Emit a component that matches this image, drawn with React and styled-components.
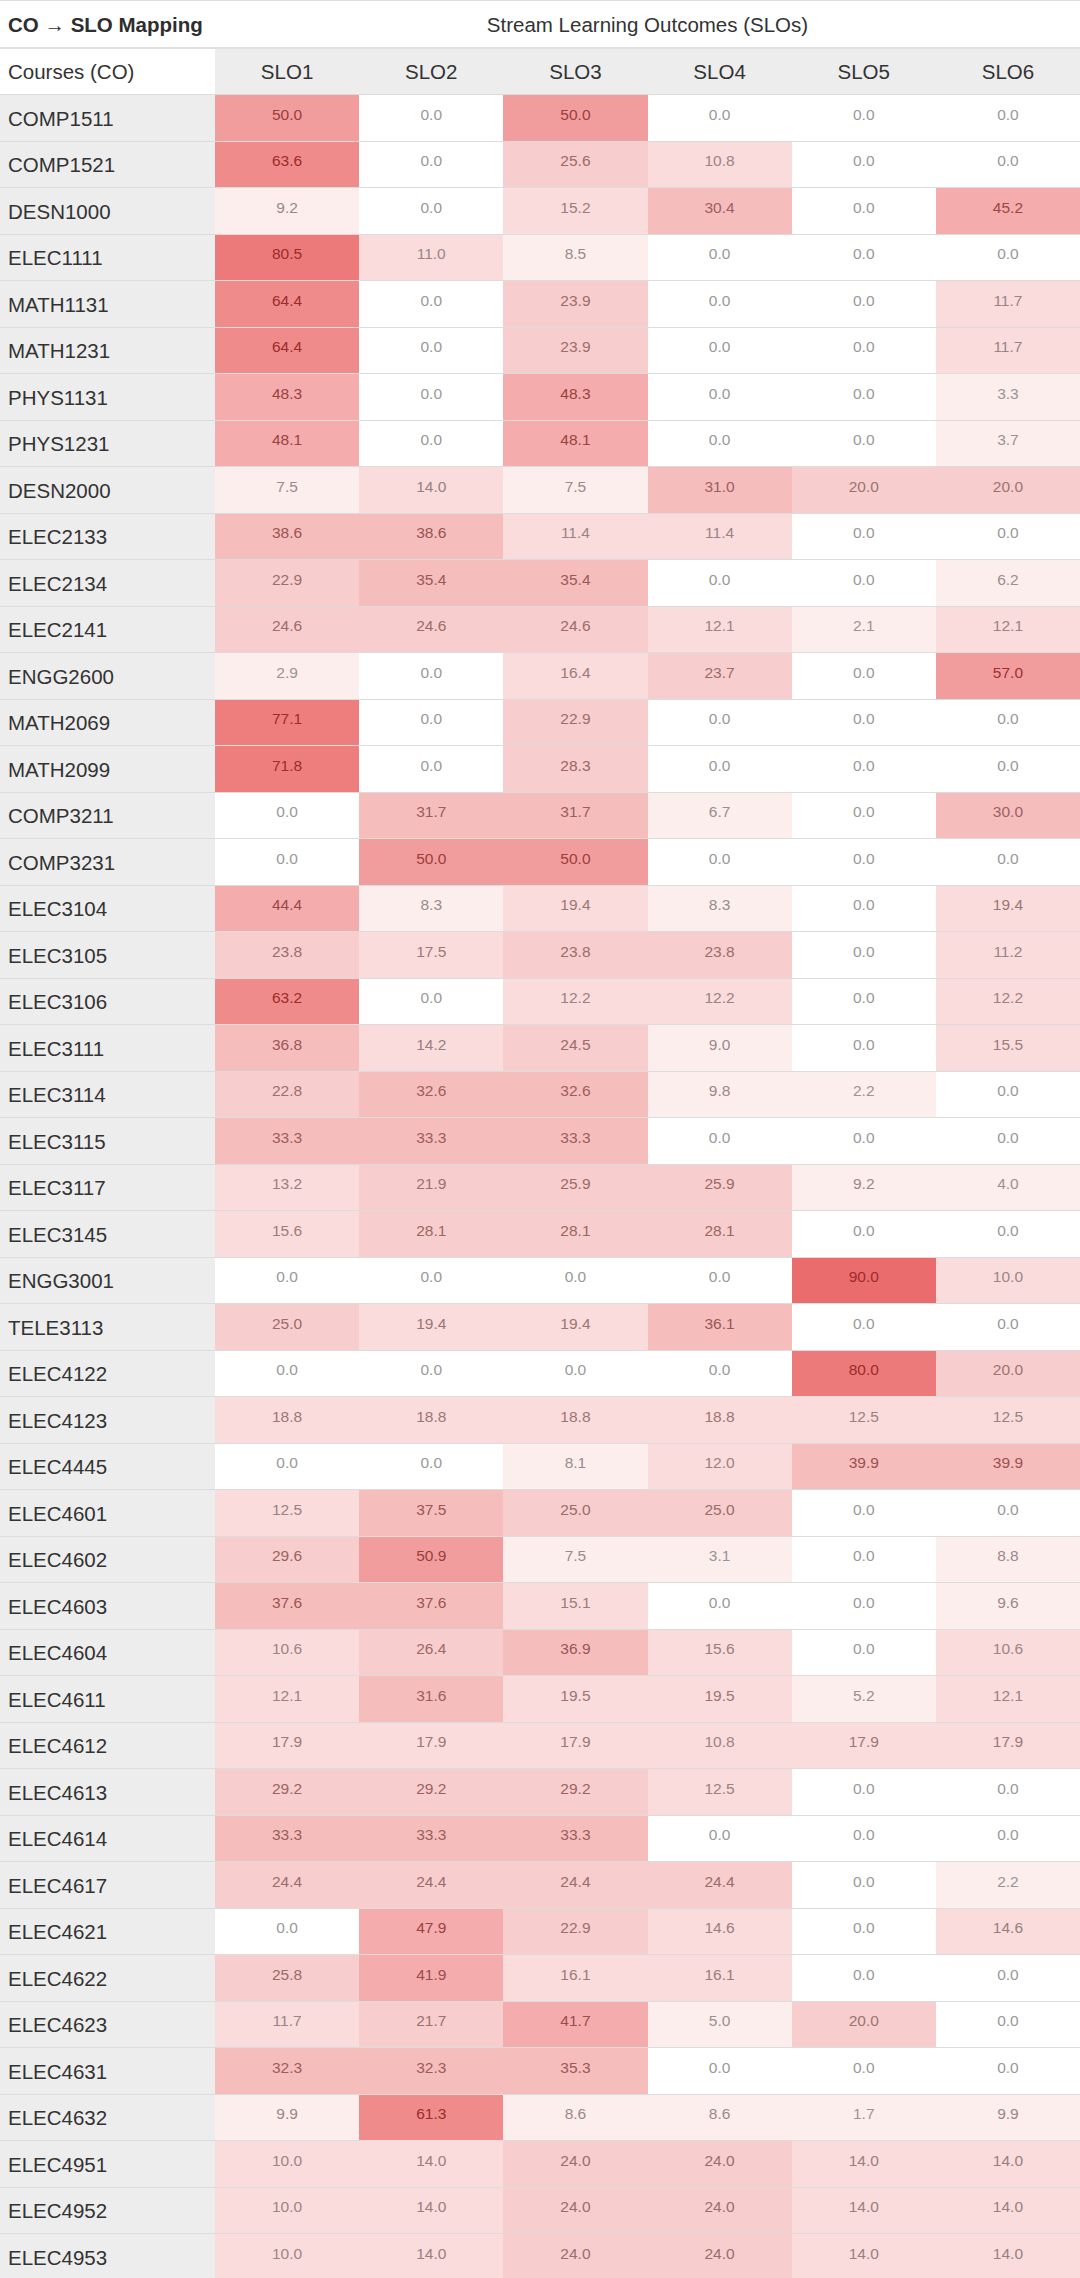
import React from "react";
import styled, { createGlobalStyle } from "styled-components";

const GlobalStyle = createGlobalStyle`
  html, body {
    margin: 0;
    padding: 0;
    background: #ffffff;
  }
  body {
    font-family: "Liberation Sans", Arial, Helvetica, sans-serif;
    color: #333333;
  }
`;

const ROWS = [
  ["COMP1511", [50.0, 0.0, 50.0, 0.0, 0.0, 0.0]],
  ["COMP1521", [63.6, 0.0, 25.6, 10.8, 0.0, 0.0]],
  ["DESN1000", [9.2, 0.0, 15.2, 30.4, 0.0, 45.2]],
  ["ELEC1111", [80.5, 11.0, 8.5, 0.0, 0.0, 0.0]],
  ["MATH1131", [64.4, 0.0, 23.9, 0.0, 0.0, 11.7]],
  ["MATH1231", [64.4, 0.0, 23.9, 0.0, 0.0, 11.7]],
  ["PHYS1131", [48.3, 0.0, 48.3, 0.0, 0.0, 3.3]],
  ["PHYS1231", [48.1, 0.0, 48.1, 0.0, 0.0, 3.7]],
  ["DESN2000", [7.5, 14.0, 7.5, 31.0, 20.0, 20.0]],
  ["ELEC2133", [38.6, 38.6, 11.4, 11.4, 0.0, 0.0]],
  ["ELEC2134", [22.9, 35.4, 35.4, 0.0, 0.0, 6.2]],
  ["ELEC2141", [24.6, 24.6, 24.6, 12.1, 2.1, 12.1]],
  ["ENGG2600", [2.9, 0.0, 16.4, 23.7, 0.0, 57.0]],
  ["MATH2069", [77.1, 0.0, 22.9, 0.0, 0.0, 0.0]],
  ["MATH2099", [71.8, 0.0, 28.3, 0.0, 0.0, 0.0]],
  ["COMP3211", [0.0, 31.7, 31.7, 6.7, 0.0, 30.0]],
  ["COMP3231", [0.0, 50.0, 50.0, 0.0, 0.0, 0.0]],
  ["ELEC3104", [44.4, 8.3, 19.4, 8.3, 0.0, 19.4]],
  ["ELEC3105", [23.8, 17.5, 23.8, 23.8, 0.0, 11.2]],
  ["ELEC3106", [63.2, 0.0, 12.2, 12.2, 0.0, 12.2]],
  ["ELEC3111", [36.8, 14.2, 24.5, 9.0, 0.0, 15.5]],
  ["ELEC3114", [22.8, 32.6, 32.6, 9.8, 2.2, 0.0]],
  ["ELEC3115", [33.3, 33.3, 33.3, 0.0, 0.0, 0.0]],
  ["ELEC3117", [13.2, 21.9, 25.9, 25.9, 9.2, 4.0]],
  ["ELEC3145", [15.6, 28.1, 28.1, 28.1, 0.0, 0.0]],
  ["ENGG3001", [0.0, 0.0, 0.0, 0.0, 90.0, 10.0]],
  ["TELE3113", [25.0, 19.4, 19.4, 36.1, 0.0, 0.0]],
  ["ELEC4122", [0.0, 0.0, 0.0, 0.0, 80.0, 20.0]],
  ["ELEC4123", [18.8, 18.8, 18.8, 18.8, 12.5, 12.5]],
  ["ELEC4445", [0.0, 0.0, 8.1, 12.0, 39.9, 39.9]],
  ["ELEC4601", [12.5, 37.5, 25.0, 25.0, 0.0, 0.0]],
  ["ELEC4602", [29.6, 50.9, 7.5, 3.1, 0.0, 8.8]],
  ["ELEC4603", [37.6, 37.6, 15.1, 0.0, 0.0, 9.6]],
  ["ELEC4604", [10.6, 26.4, 36.9, 15.6, 0.0, 10.6]],
  ["ELEC4611", [12.1, 31.6, 19.5, 19.5, 5.2, 12.1]],
  ["ELEC4612", [17.9, 17.9, 17.9, 10.8, 17.9, 17.9]],
  ["ELEC4613", [29.2, 29.2, 29.2, 12.5, 0.0, 0.0]],
  ["ELEC4614", [33.3, 33.3, 33.3, 0.0, 0.0, 0.0]],
  ["ELEC4617", [24.4, 24.4, 24.4, 24.4, 0.0, 2.2]],
  ["ELEC4621", [0.0, 47.9, 22.9, 14.6, 0.0, 14.6]],
  ["ELEC4622", [25.8, 41.9, 16.1, 16.1, 0.0, 0.0]],
  ["ELEC4623", [11.7, 21.7, 41.7, 5.0, 20.0, 0.0]],
  ["ELEC4631", [32.3, 32.3, 35.3, 0.0, 0.0, 0.0]],
  ["ELEC4632", [9.9, 61.3, 8.6, 8.6, 1.7, 9.9]],
  ["ELEC4951", [10.0, 14.0, 24.0, 24.0, 14.0, 14.0]],
  ["ELEC4952", [10.0, 14.0, 24.0, 24.0, 14.0, 14.0]],
  ["ELEC4953", [10.0, 14.0, 24.0, 24.0, 14.0, 14.0]],
];

const SLOS = ["SLO1", "SLO2", "SLO3", "SLO4", "SLO5", "SLO6"];

const ALPHAS = [0.09, 0.18, 0.26, 0.34, 0.43, 0.51, 0.6, 0.67, 0.69, 0.76];

const cellBg = (v) => {
  if (v <= 0) return "#ffffff";
  const k = Math.min(9, Math.floor(v / 10));
  return `rgba(229, 62, 62, ${ALPHAS[k]})`;
};

const cellInk = (v) => {
  const t = Math.min(1, v / 60);
  const r = Math.round(153 + (155 - 153) * t);
  const g = Math.round(153 - (153 - 44) * t);
  return `rgb(${r}, ${g}, ${g})`;
};

const COLS = "215px repeat(6, 1fr)";

const Sheet = styled.div`
  width: 1080px;
  border-top: 1px solid #dedede;
`;

const TitleRow = styled.div`
  display: grid;
  grid-template-columns: 215px 1fr;
  height: 48px;
  box-sizing: border-box;
  border-bottom: 2px solid #e0e0e0;
  background: #ffffff;
`;

const TitleCell = styled.div`
  display: flex;
  align-items: center;
  padding: 1px 0 0 8px;
  font-size: 20.5px;
  font-weight: 700;
  color: #2e2e2e;
  white-space: nowrap;
`;

const GroupCell = styled.div`
  display: flex;
  align-items: center;
  justify-content: center;
  padding-top: 1px;
  font-size: 20.5px;
  color: #333333;
`;

const HeaderRow = styled.div`
  display: grid;
  grid-template-columns: ${COLS};
  height: 46px;
  box-sizing: border-box;
  border-bottom: 1px solid #dcdcdc;
`;

const CornerCell = styled.div`
  display: flex;
  align-items: center;
  padding: 1px 0 0 8px;
  background: #ffffff;
  font-size: 20.5px;
  color: #333333;
`;

const SloHead = styled.div`
  display: flex;
  align-items: center;
  justify-content: center;
  padding-top: 1px;
  background: #ededed;
  font-size: 20.5px;
  color: #333333;
`;

const DataRow = styled.div`
  display: grid;
  grid-template-columns: ${COLS};
  height: 46.5px;
  box-sizing: border-box;
  border-bottom: 1px solid #dcdcdc;
`;

const CourseCell = styled.div`
  display: flex;
  align-items: center;
  padding: 2px 0 0 8px;
  background: #ededed;
  font-size: 20.5px;
  color: #333333;
`;

const ValueCell = styled.div`
  display: flex;
  align-items: center;
  justify-content: center;
  padding-bottom: 6px;
  box-sizing: border-box;
  background: ${(p) => cellBg(p.$v)};
  color: ${(p) => cellInk(p.$v)};
  font-size: 15.5px;
`;

export default function App() {
  return (
    <>
      <GlobalStyle />
      <Sheet>
        <TitleRow>
          <TitleCell>CO → SLO Mapping</TitleCell>
          <GroupCell>Stream Learning Outcomes (SLOs)</GroupCell>
        </TitleRow>
        <HeaderRow>
          <CornerCell>Courses (CO)</CornerCell>
          {SLOS.map((s) => (
            <SloHead key={s}>{s}</SloHead>
          ))}
        </HeaderRow>
        {ROWS.map(([course, values]) => (
          <DataRow key={course}>
            <CourseCell>{course}</CourseCell>
            {values.map((v, i) => (
              <ValueCell key={i} $v={v}>
                {v.toFixed(1)}
              </ValueCell>
            ))}
          </DataRow>
        ))}
      </Sheet>
    </>
  );
}
